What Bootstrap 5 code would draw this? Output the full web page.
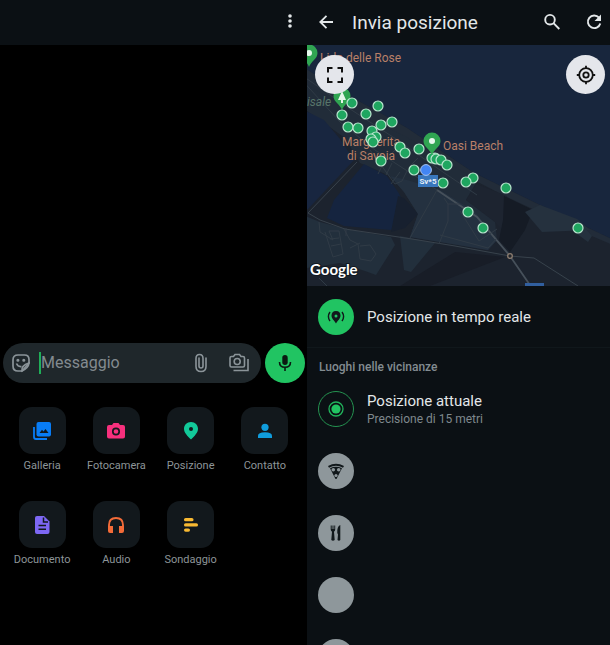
<!DOCTYPE html>
<html lang="it">
<head>
<meta charset="utf-8">
<meta name="viewport" content="width=device-width, initial-scale=1">
<title>Invia posizione</title>
<link href="https://cdn.jsdelivr.net/npm/bootstrap@5.3.0/dist/css/bootstrap.min.css" rel="stylesheet">
<style>
body { background: #000; color: #e3e7e9; font-family: Roboto, "Liberation Sans", sans-serif; }
svg { display: block; }
.screens { display: grid; grid-template-columns: 307fr 303fr; }
.screens > section { min-width: 0; }
.topbar { height: 45px; background: #0b1014; }
.chat { background: #000; }
.icon-btn { background: none; border: 0; padding: 0; color: inherit; flex: none; }
.share-bar { padding: 0 7px 0 9px; }
.chat-body { height: 298px; flex: none; }
.composer { padding: 0 2px 0 3px; gap: 4px; }
.field { background: #1f272b; height: 40px; border-radius: 20px; padding: 0 11px 0 8px; color: #8b9499; min-width: 0; }
.field input { background: none; border: 0; border-left: 2px solid #1fae58; outline: 0; padding: 0; height: 22px; font-size: 16px; line-height: 22px; color: #e3e7e9; min-width: 0; width: 0; caret-color: #21c063; }
.field input::placeholder { color: #838b90; opacity: 1; }
.mic { background: #21c462; width: 40px; height: 40px; color: #0b1a12; }
.tools { display: grid; grid-template-columns: repeat(4, minmax(0, 1fr)); row-gap: 27px; padding: 24px 5px 0; }
.tool { background: none; border: 0; padding: 0; color: #8d9598; font-size: 11px; line-height: 16px; }
.tile { width: 47px; height: 47px; border-radius: 13px; background: #12181c; margin-bottom: 4px; }
.share { background: #0b1014; }
.screen-title { font-size: 19px; line-height: 24px; font-weight: 400; }
.map-wrap { height: 241px; background: #18263d; }
.map-btn { width: 39px; height: 39px; background: #e4e6eb; color: #111; top: 10px; }
.map-btn.full { left: 8px; }
.map-btn.locate { right: 5px; }
.place { height: 62px; padding-left: 11px; gap: 13px; color: inherit; background: none; border: 0; text-align: left; flex: none; }
.live { border-bottom: 1px solid #10171b; }
.disc { width: 36px; height: 36px; flex: none; background: #8e979b; color: #11181b; }
.disc.go { background: #21c462; }
.disc.ring { background: none; border: 1px solid #249350; }
.place-name { font-size: 15px; line-height: 20px; }
.place-note { font-size: 12px; line-height: 16px; color: #7f888d; }
.section-name { font-size: 12px; line-height: 16px; font-weight: 500; color: #838c91; padding: 11px 12px 3px; }
.town { font-size: 12px; fill: #b98068; }
</style>
<script src="https://cdn.jsdelivr.net/npm/bootstrap@5.3.0/dist/js/bootstrap.bundle.min.js" defer></script>
</head>
<body class="vh-100 overflow-hidden">
<div class="screens vh-100">
  <section class="chat d-flex flex-column overflow-hidden">
    <header class="topbar d-flex align-items-center justify-content-end flex-shrink-0 pe-2">
      <button class="icon-btn" aria-label="Altro"><svg width="18" height="22" viewBox="0 0 18 22" fill="currentColor"><circle cx="9" cy="4" r="1.800"/><circle cx="9" cy="9" r="1.800"/><circle cx="9" cy="14" r="1.800"/></svg></button>
    </header>
    <div class="chat-body"></div>
    <div class="composer d-flex align-items-center">
      <div class="field d-flex align-items-center flex-grow-1">
        <button class="icon-btn me-2" aria-label="Emoji"><svg width="20" height="20" viewBox="0 0 20 20" fill="none" stroke="currentColor" stroke-width="1.700"><path d="M18 10V6.500Q18 2 13.500 2H7Q2 2 2 7V13Q2 18 7 18H11Z" /><path d="M18 10Q17.500 15 11 18Q10 12.500 18 10Z"/><path d="M5.500 10.500Q7 14 10.500 13.500" /><circle cx="6.900" cy="7.200" r=".7" fill="currentColor"/><circle cx="12.800" cy="7.200" r=".7" fill="currentColor"/></svg></button>
        <input class="flex-grow-1" type="text" placeholder="Messaggio" aria-label="Messaggio">
        <button class="icon-btn me-3" aria-label="Allega"><svg width="22" height="22" viewBox="0 0 22 22" fill="none" stroke="currentColor" stroke-width="1.600"><path d="M16 6V14.500Q16 19.500 11 19.500Q6 19.500 6 14.500V6.500Q6 2.500 9.500 2.500Q13 2.500 13 6.500V14Q13 16 11 16Q9 16 9 14V6" stroke-linecap="round"/></svg></button>
        <button class="icon-btn" aria-label="Fotocamera"><svg width="22" height="22" viewBox="0 0 22 22" fill="none" stroke="currentColor" stroke-width="1.600"><path d="M3.500 4.500H5.500L7 2.500H11.500L13 4.500H15Q16.500 4.500 16.500 6V13.500Q16.500 15 15 15H3.500Q2 15 2 13.500V6Q2 4.500 3.500 4.500Z"/><circle cx="9.200" cy="9.500" r="3"/><path d="M20 7V18.500H5.500"/></svg></button>
      </div>
      <button class="icon-btn mic rounded-circle d-flex align-items-center justify-content-center" aria-label="Registra"><svg width="20" height="20" viewBox="0 0 20 20"><rect x="7.300" y="2" width="5.400" height="10" rx="2.700" fill="currentColor"/><path d="M4.500 9Q4.500 14.300 10 14.300Q15.500 14.300 15.500 9M10 14.300V18" fill="none" stroke="currentColor" stroke-width="1.600"/></svg></button>
    </div>
    <div class="tools">
      <button class="tool d-flex flex-column align-items-center"><span class="tile d-flex align-items-center justify-content-center"><svg width="20" height="20" viewBox="0 0 20 20"><path d="M2 6V16Q2 18 4 18H15" fill="none" stroke="#087cf5" stroke-width="1.800"/><rect x="4.500" y="1" width="14.500" height="14.500" rx="2" fill="#087cf5"/><path d="M7.500 12L10 8.800L11.500 10.500L13.500 8L16.500 12Z" fill="#12181c"/></svg></span>Galleria</button>
      <button class="tool d-flex flex-column align-items-center"><span class="tile d-flex align-items-center justify-content-center"><svg width="20" height="20" viewBox="0 0 20 20"><path d="M3 4H6L7.500 2H12.500L14 4H17Q19 4 19 6V15.500Q19 17.500 17 17.500H3Q1 17.500 1 15.500V6Q1 4 3 4Z" fill="#f7307d"/><circle cx="10" cy="10.500" r="3.200" fill="none" stroke="#12181c" stroke-width="1.700"/></svg></span>Fotocamera</button>
      <button class="tool d-flex flex-column align-items-center"><span class="tile d-flex align-items-center justify-content-center"><svg width="20" height="20" viewBox="0 0 20 20"><path d="M10 1C5.800 1 3 4 3 7.800C3 12 6.500 15 10 18.500C13.500 15 17 12 17 7.800C17 4 14.200 1 10 1Z" fill="#12c999"/><circle cx="10" cy="7.900" r="2" fill="#12181c"/></svg></span>Posizione</button>
      <button class="tool d-flex flex-column align-items-center"><span class="tile d-flex align-items-center justify-content-center"><svg width="20" height="20" viewBox="0 0 20 20" fill="#109ddd"><circle cx="10" cy="6.300" r="3.600"/><path d="M3 17V14.800Q3 11.200 10 11.200Q17 11.200 17 14.800V17Z"/></svg></span>Contatto</button>
      <button class="tool d-flex flex-column align-items-center"><span class="tile d-flex align-items-center justify-content-center"><svg width="20" height="20" viewBox="0 0 20 20"><path d="M5 1H12L17.500 6.500V17Q17.500 19 15.500 19H5Q3 19 3 17V3Q3 1 5 1Z" fill="#7d67f3"/><path d="M11.500 2.500V7H16M6.500 10.500H14M6.500 14.300H14" fill="none" stroke="#12181c" stroke-width="1.500"/></svg></span>Documento</button>
      <button class="tool d-flex flex-column align-items-center"><span class="tile d-flex align-items-center justify-content-center"><svg width="20" height="20" viewBox="0 0 20 20"><path d="M3 14V10Q3 3 10 3Q17 3 17 10V14" fill="none" stroke="#f36b38" stroke-width="1.900"/><path d="M2 11H7V18H4Q2 18 2 16ZM18 11H13V18H16Q18 18 18 16Z" fill="#f36b38"/></svg></span>Audio</button>
      <button class="tool d-flex flex-column align-items-center"><span class="tile d-flex align-items-center justify-content-center"><svg width="20" height="20" viewBox="0 0 20 20" fill="#f8b932"><rect x="3" y="3" width="9.500" height="3.300" rx="1.600"/><rect x="3" y="8.200" width="14" height="3.300" rx="1.600"/><rect x="3" y="13.400" width="6" height="3.300" rx="1.600"/></svg></span>Sondaggio</button>
    </div>
  </section>

  <section class="share d-flex flex-column overflow-hidden">
    <header class="topbar share-bar d-flex align-items-center flex-shrink-0">
      <button class="icon-btn" aria-label="Indietro"><svg width="20" height="20" viewBox="0 0 20 20" fill="none" stroke="currentColor" stroke-width="1.800"><path d="M17 9H4.500M10.500 2.800L4.300 9L10.500 15.200"/></svg></button>
      <h1 class="screen-title mb-0 ms-3 ps-0 flex-grow-1">Invia posizione</h1>
      <button class="icon-btn me-4" aria-label="Cerca"><svg width="18" height="20" viewBox="0 0 18 20" fill="none" stroke="currentColor" stroke-width="1.900"><circle cx="7" cy="6.700" r="4.800"/><path d="M10.500 10.200L16.300 16"/></svg></button>
      <button class="icon-btn" aria-label="Aggiorna"><svg width="18" height="20" viewBox="0 0 18 20"><path d="M14 4.700A6.300 6.300 0 1 0 15.300 10.500" fill="none" stroke="currentColor" stroke-width="1.900"/><path d="M16 1.500V8H9.500Z" fill="currentColor"/></svg></button>
    </header>
    <div class="map-wrap position-relative overflow-hidden flex-shrink-0">
      <svg class="w-100 h-100" viewBox="307 45 303 241" preserveAspectRatio="xMidYMid slice" role="img" aria-label="Mappa di Margherita di Savoia">
        <defs>
          <g id="spot"><circle r="5" fill="#1fa660" stroke="#b9e6ce" stroke-width="1.200"/></g>
          <path id="pin" d="M0 12C-2 6-8.500 4-8.500-2A8.500 8.500 0 0 1 8.500-2C8.500 4 2 6 0 12Z" fill="#30a552"/>
        </defs>
        <rect x="300" y="40" width="320" height="250" fill="#18263d"/>
        <path d="M300 65L340 91L375 110L407 128L474 173L540 205L620 243V290H300Z" fill="#1c232e"/>
        <path d="M300 65L340 91L375 110L407 128L474 173L540 205L620 243V248L580 231L505 196L470 178L405 138L345 110L300 88Z" fill="#222c39"/>
        <path d="M300 80L345 108L405 136L470 176L476 183L466 200L495 222L497 240L488 250L410 237L418 214L404 192L390 176L360 163L345 138L300 106Z" fill="#212c39"/>
        <path d="M300 108L324 120L340 139L354 160L308 209H300Z" fill="#182640"/>
        <path d="M364 164L387 176L398 192L409 212L391 230L344 226L327 218L334 200Z" fill="#15243f"/>
        <path d="M398 196L404 198L418 214L405 228L391 232Z" fill="#17202f"/>
        <path d="M390 176L407 180L440 190L475 212L497 240L488 250L410 237L418 214L404 192Z" fill="#243140"/>
        <path d="M300 214L320 222L346 229L391 237L395 245L376 275L365 271L340 263L300 269Z" fill="#222f3c"/>
        <path d="M400 236L435 243L425 255L411 272L404 270Z" fill="#222f3c"/>
        <path d="M476 184L507 196L503 230L495 222L466 200Z" fill="#1d2430"/>
        <path d="M504 196L533 210L525 230L510 252L499 240L503 220Z" fill="#151b25"/>
        <path d="M525 212L540 205L577 219L590 230L542 232Z" fill="#25313e"/>
        <path d="M577 220L592 236L588 242L573 231Z" fill="#25313e"/>
        <path d="M455 252L505 257L430 286H400Z" fill="#181d27"/>
        <g fill="none" stroke="#38424c" stroke-width="1">
          <path d="M357 162L308 213L320 220L345 229L412 239L455 246L510 256L534 258L578 286"/>
          <path d="M437 190L477 217L510 256L532 288" stroke="#46505a" stroke-width="1.800"/>
        </g>
        <g fill="none" stroke="#303b46" stroke-width="1">
          <path d="M300 78L340 122L375 150L412 174L437 190M300 74L350 109L396 139L440 170L477 195"/>
          <path d="M437 190L410 238M444 198L448 204V221L439 244M448 204L460 204M440 235L488 248L497 238M460 211L479 241L497 229"/>
          <path d="M370 150L395 184L402 181L407 171M385 160L378 174M392 163L386 175M400 172L391 184M390 155L398 147M410 166L418 158"/>
          <path d="M319 222L320 232L333 240L329 231L339 231L343 254L333 257L325 232M330 239L339 238M331 246L341 244M344 229L350 240L358 244L360 259L371 261L376 254L370 245L360 246M350 248L360 243M346 228V236M319 278L327 286"/>
        </g>
        <use href="#pin" x="309" y="55"/><circle cx="309" cy="53" r="3" fill="#e7f7ed"/>
        <text class="town" x="320" y="62">Lido delle Rose</text>
        <text x="307" y="106" font-size="12" font-style="italic" fill="#58756a">isale</text>
        <text class="town" x="371" y="146" text-anchor="middle">Margherita</text>
        <text class="town" x="371" y="160" text-anchor="middle">di Savoia</text>
        <text class="town" x="443" y="150">Oasi Beach</text>
        <use href="#pin" x="342" y="98"/><path d="M342 91L346 100H343V103H341V100H338Z" fill="#e6f6eb"/>
        <use href="#spot" x="352" y="103"/><use href="#spot" x="342" y="115"/><use href="#spot" x="378" y="106"/><use href="#spot" x="366" y="114"/><use href="#spot" x="348" y="127"/><use href="#spot" x="358" y="128"/><use href="#spot" x="381" y="125"/><use href="#spot" x="392" y="122"/><use href="#spot" x="372" y="131"/><use href="#spot" x="376" y="137"/><use href="#spot" x="371" y="139"/><use href="#spot" x="373" y="142"/><use href="#spot" x="381" y="161"/><use href="#spot" x="400" y="147"/><use href="#spot" x="405" y="153"/><use href="#spot" x="419" y="149"/><use href="#spot" x="435" y="158"/><use href="#spot" x="432" y="158"/><use href="#spot" x="436" y="159"/><use href="#spot" x="441" y="160"/><use href="#spot" x="447" y="165"/><use href="#spot" x="414" y="170"/><use href="#spot" x="443" y="183"/><use href="#spot" x="473" y="178"/><use href="#spot" x="466" y="182"/><use href="#spot" x="506" y="188"/><use href="#spot" x="468" y="212"/><use href="#spot" x="483" y="228"/><use href="#spot" x="578" y="228"/>
        <use href="#pin" x="432" y="143"/><circle cx="432" cy="141" r="3" fill="#e7f7ed"/>
        <rect x="418" y="175" width="20" height="12" fill="#3977bd"/><text x="428" y="184" text-anchor="middle" font-size="8" font-weight="700" fill="#e4eef8">Sv*5</text>
        <circle cx="426" cy="170" r="5.400" fill="#4285f4" stroke="#a9c6f2" stroke-width="1"/>
        <circle cx="510" cy="256" r="2.300" fill="#22252b" stroke="#8c7d70" stroke-width="1.300"/>
        <rect x="525" y="283" width="19" height="3" fill="#315f9f"/>
        <text x="310" y="275" font-family="Lato, sans-serif" font-size="15" font-weight="700" fill="#fff" stroke="#111820" stroke-width="2" paint-order="stroke">Google</text>
      </svg>
      <button class="icon-btn map-btn full position-absolute rounded-circle d-flex align-items-center justify-content-center" aria-label="Schermo intero"><svg width="18" height="18" viewBox="0 0 18 18" fill="none" stroke="currentColor" stroke-width="2"><path d="M2 6.500V2H6.500M11.500 2H16V6.500M16 11.500V16H11.500M6.500 16H2V11.500"/></svg></button>
      <button class="icon-btn map-btn locate position-absolute rounded-circle d-flex align-items-center justify-content-center" aria-label="La mia posizione"><svg width="20" height="20" viewBox="0 0 20 20" fill="none" stroke="currentColor" stroke-width="1.800"><circle cx="10" cy="10" r="6.800"/><circle cx="10" cy="10" r="2.700"/><path d="M10 .8V4M10 16V19.200M.8 10H4M16 10H19.200"/></svg></button>
    </div>
    <button class="place live d-flex align-items-center">
      <span class="disc go rounded-circle d-flex align-items-center justify-content-center"><svg width="18" height="18" viewBox="0 0 18 18"><path d="M9 3C6 3 4.500 5 4.500 7.500C4.500 11 7.500 12.500 9 15.500C10.500 12.500 13.500 11 13.500 7.500C13.500 5 12 3 9 3Z" fill="currentColor"/><circle cx="9" cy="8" r="1.500" fill="#21c462"/><path d="M3 4Q-.2 8.500 3 13M15 4Q18.200 8.500 15 13" fill="none" stroke="currentColor" stroke-width="1.400"/></svg></span>
      <span class="place-name">Posizione in tempo reale</span>
    </button>
    <h2 class="section-name mb-0">Luoghi nelle vicinanze</h2>
    <button class="place d-flex align-items-center">
      <span class="disc ring rounded-circle d-flex align-items-center justify-content-center"><svg width="18" height="18" viewBox="0 0 18 18"><circle cx="9" cy="9" r="7" fill="none" stroke="#21b45c" stroke-width="1.300"/><circle cx="9" cy="9" r="4.600" fill="#21c462"/></svg></span>
      <span><span class="place-name d-block">Posizione attuale</span><span class="place-note d-block">Precisione di 15 metri</span></span>
    </button>
    <button class="place d-flex align-items-center" aria-label="Pizzeria"><span class="disc rounded-circle d-flex align-items-center justify-content-center"><svg width="18" height="18" viewBox="0 0 18 18"><path d="M1 4Q9-.5 17 4L16 5.700Q9 2 2 5.700Z" fill="currentColor"/><path d="M3 6.200Q9 3.500 15 6.200L9.500 17H8.500Z" fill="currentColor"/><circle cx="6.300" cy="7.700" r="1.800" fill="#8e979b"/><circle cx="11.700" cy="7.700" r="1.800" fill="#8e979b"/><circle cx="9" cy="13.500" r="1.600" fill="#8e979b"/></svg></span></button>
    <button class="place d-flex align-items-center" aria-label="Ristorante"><span class="disc rounded-circle d-flex align-items-center justify-content-center"><svg width="18" height="18" viewBox="0 0 18 18" fill="currentColor"><path d="M3.700 1.500H4.700V5H5.500V1.500H6.500V5H7.300V1.500H8.200V5.500Q8.200 7 7 7.800L7.700 16Q6 17.500 4.300 16L5 7.800Q3.700 7 3.700 5.500ZM10.500 16L11 10.500L10.300 9Q9.800 2.500 13.300 1V16Q12 17.500 10.500 16Z"/></svg></span></button>
    <button class="place d-flex align-items-center" aria-label="Luogo"><span class="disc rounded-circle"></span></button>
    <button class="place d-flex align-items-center" aria-label="Luogo"><span class="disc rounded-circle"></span></button>
  </section>
</div>
</body>
</html>
